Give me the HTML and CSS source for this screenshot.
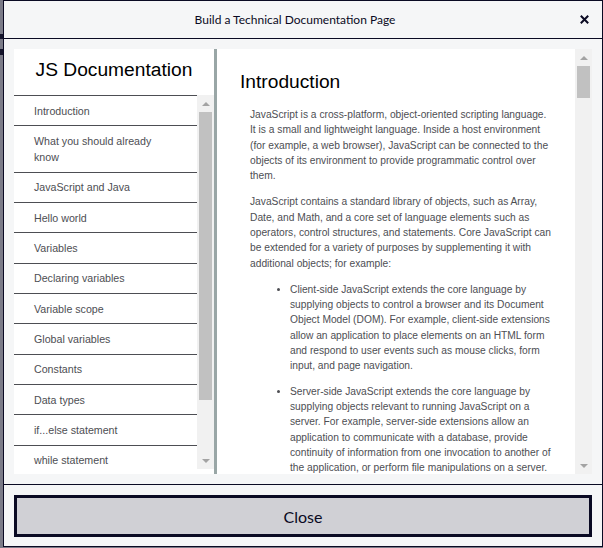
FILE: index.html
```html
<!DOCTYPE html>
<html lang="en">
<head>
<meta charset="utf-8">
<title>Build a Technical Documentation Page</title>
<link rel="stylesheet" href="styles.css">
</head>
<body>
<div class="backdrop-mark mark-a"></div>
<div class="backdrop-mark mark-b"></div>
<div class="modal">
  <div class="modal-header">
    <h2 class="modal-title">Build a Technical Documentation Page</h2>
    <button class="modal-x" aria-label="Close">
      <svg width="9" height="9" viewBox="0 0 9 9"><path d="M0.8 0.8 L8.2 8.2 M8.2 0.8 L0.8 8.2" stroke="#0a0a23" stroke-width="2" fill="none"/></svg>
    </button>
  </div>
  <div class="modal-body">
    <div class="preview">
      <nav class="nav">
        <header class="nav-title">JS Documentation</header>
        <div class="nav-scroll">
          <ul class="nav-list">
            <li class="nav-item"><a class="nav-link" href="#Introduction">Introduction</a></li>
            <li class="nav-item"><a class="nav-link" href="#What_you_should_already_know">What you should already know</a></li>
            <li class="nav-item"><a class="nav-link" href="#JavaScript_and_Java">JavaScript and Java</a></li>
            <li class="nav-item"><a class="nav-link" href="#Hello_world">Hello world</a></li>
            <li class="nav-item"><a class="nav-link" href="#Variables">Variables</a></li>
            <li class="nav-item"><a class="nav-link" href="#Declaring_variables">Declaring variables</a></li>
            <li class="nav-item"><a class="nav-link" href="#Variable_scope">Variable scope</a></li>
            <li class="nav-item"><a class="nav-link" href="#Global_variables">Global variables</a></li>
            <li class="nav-item"><a class="nav-link" href="#Constants">Constants</a></li>
            <li class="nav-item"><a class="nav-link" href="#Data_types">Data types</a></li>
            <li class="nav-item"><a class="nav-link" href="#if...else_statement">if...else statement</a></li>
            <li class="nav-item"><a class="nav-link" href="#while_statement">while statement</a></li>
          </ul>
          <div class="scrollbar">
            <span class="sb-btn"><span class="sb-arrow-up"></span></span>
            <span class="sb-track"><span class="sb-thumb sb-thumb-nav"></span></span>
            <span class="sb-btn"><span class="sb-arrow-down"></span></span>
          </div>
        </div>
      </nav>
      <div class="main-wrap">
        <main class="main">
          <section class="section" id="Introduction">
            <header class="section-title">Introduction</header>
            <article class="article">
              <p>JavaScript is a cross-platform, object-oriented scripting language. It is a small and lightweight language. Inside a host environment (for example, a web browser), JavaScript can be connected to the objects of its environment to provide programmatic control over them.</p>
              <p>JavaScript contains a standard library of objects, such as Array, Date, and Math, and a core set of language elements such as operators, control structures, and statements. Core JavaScript can be extended for a variety of purposes by supplementing it with additional objects; for example:</p>
              <ul>
                <li>Client-side JavaScript extends the core language by supplying objects to control a browser and its Document Object Model (DOM). For example, client-side extensions allow an application to place elements on an HTML form and respond to user events such as mouse clicks, form input, and page navigation.</li>
                <li>Server-side JavaScript extends the core language by supplying objects relevant to running JavaScript on a server. For example, server-side extensions allow an application to communicate with a database, provide continuity of information from one invocation to another of the application, or perform file manipulations on a server.</li>
              </ul>
            </article>
          </section>
        </main>
        <div class="scrollbar">
          <span class="sb-btn"><span class="sb-arrow-up"></span></span>
          <span class="sb-track"><span class="sb-thumb sb-thumb-main"></span></span>
          <span class="sb-btn"><span class="sb-arrow-down"></span></span>
        </div>
      </div>
    </div>
  </div>
  <div class="modal-footer">
    <button class="close-btn">Close</button>
  </div>
</div>
</body>
</html>
```

FILE: styles.css
```css
* { box-sizing: border-box; }
html, body { margin: 0; padding: 0; }
body {
  background: #7b7b88;
  width: 603px;
  height: 548px;
  overflow: hidden;
  position: relative;
  font-family: Lato, "Liberation Sans", sans-serif;
}
.backdrop-mark { position: absolute; left: 0; width: 3px; background: #15152c; }
.mark-a { top: 34px; height: 5px; }
.mark-b { top: 49px; height: 6px; }

.modal {
  margin-left: 3px;
  width: 600px;
  height: 547px;
  border: 1px solid #0a0a23;
  background: #f5f6f7;
  display: flex;
  flex-direction: column;
}
.modal-header {
  position: relative;
  height: 38px;
  flex: none;
  border-bottom: 1px solid #0a0a23;
  display: flex;
  align-items: center;
  justify-content: center;
  padding-right: 16px;
}
.modal-title {
  margin: 0;
  font-family: Lato, sans-serif;
  font-size: 12px;
  font-weight: 400;
  color: #0a0a23;
}
.modal-x {
  position: absolute;
  right: 13px;
  top: 14px;
  width: 9px;
  height: 9px;
  padding: 0;
  border: 0;
  background: transparent;
  display: block;
}
.modal-x svg { display: block; }

.modal-body { height: 445px; flex: none; padding: 10px; }
.preview {
  display: flex;
  height: 425px;
  background: #fff;
  font-family: "Liberation Sans", Arial, sans-serif;
}

/* nav */
.nav {
  width: 203px;
  flex: none;
  border-right: 3px solid #99a6a6;
  display: flex;
  flex-direction: column;
}
.nav-title {
  margin: 6.67px 6.67px 0;
  font-size: 19.2px;
  line-height: 28.8px;
  text-align: center;
  color: #000;
}
.nav-scroll {
  display: flex;
  height: 374px;
  margin-top: 10.67px;
  flex: none;
}
.nav-list {
  list-style: none;
  margin: 0;
  padding: 0;
  flex: 1;
  overflow: hidden;
}
.nav-item { border-top: 1px solid #4d4e53; }
.nav-link {
  display: block;
  padding: 6.67px 20px;
  font-size: 10.67px;
  line-height: 16px;
  color: #4d4e53;
  text-decoration: none;
}

/* main */
.main-wrap { flex: 1; display: flex; min-width: 0; }
.main {
  flex: 1;
  overflow: hidden;
  padding: 18.5px 13px 0 23px;
}
.section-title {
  font-size: 19.2px;
  line-height: 28.8px;
  color: #000;
}
.article {
  display: block;
  margin: 0 10px;
  font-size: 10.24px;
  line-height: 1.5;
  color: #4d4e53;
}
.article p { margin: 10.67px 0; }
.article ul { margin: 10.67px 0; padding-left: 26.67px; }
.article li { margin: 10px 0 0 13.33px; }

/* scrollbars */
.scrollbar {
  width: 17px;
  flex: none;
  background: #f1f1f1;
  display: flex;
  flex-direction: column;
}
.sb-btn {
  height: 17px;
  flex: none;
  display: flex;
  align-items: center;
  justify-content: center;
}
.sb-arrow-up {
  width: 0;
  height: 0;
  border-left: 4px solid transparent;
  border-right: 4px solid transparent;
  border-bottom: 4px solid #a3a3a3;
}
.sb-arrow-down {
  width: 0;
  height: 0;
  border-left: 4px solid transparent;
  border-right: 4px solid transparent;
  border-top: 4px solid #a3a3a3;
}
.sb-track { flex: 1; display: flex; flex-direction: column; padding: 0 2px; }
.sb-thumb { display: block; background: #c1c1c1; flex: none; }
.sb-thumb-nav { height: 288px; }
.sb-thumb-main { height: 32px; }

/* footer */
.modal-footer {
  height: 62px;
  flex: none;
  border-top: 1px solid #0a0a23;
  padding: 10px 10px 0;
}
.close-btn {
  display: block;
  width: 100%;
  height: 42px;
  border: 3px solid #0a0a23;
  background: #d0d0d5;
  font-family: Lato, sans-serif;
  font-size: 16px;
  color: #0a0a23;
  padding: 0;
}
```
